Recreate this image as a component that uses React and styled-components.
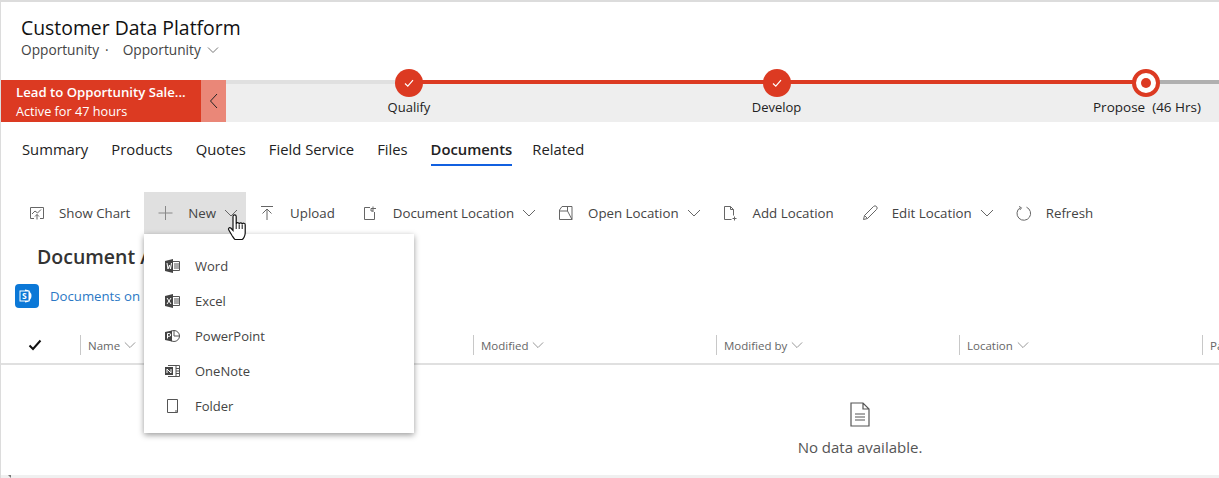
import React from "react";
import styled, { createGlobalStyle } from "styled-components";

const GlobalStyle = createGlobalStyle`
  html, body {
    margin: 0;
    padding: 0;
    background: #fff;
  }
  body {
    font-family: "Open Sans", "Noto Sans", sans-serif;
    overflow: hidden;
  }
`;

const Page = styled.div`
  position: relative;
  width: 1219px;
  height: 478px;
  box-sizing: border-box;
  overflow: hidden;
  border-top: 2px solid #dcdcdc;
  border-left: 1px solid #dcdcdc;
`;

const Header = styled.header`
  height: 78px;
  box-sizing: border-box;
  padding: 13px 0 0 20px;
`;

const Title = styled.h1`
  margin: 0;
  font-size: 19.4px;
  line-height: 26px;
  font-weight: 400;
  color: #111;
`;

const Sub = styled.div`
  display: flex;
  align-items: center;
  font-size: 13.7px;
  line-height: 18px;
  color: #444;
`;

const SubDot = styled.span`
  margin: 0 14px 0 6px;
`;

const SubCaret = styled.svg`
  margin-left: 6px;
`;

const Bpf = styled.div`
  display: flex;
  height: 42px;
`;

const Flag = styled.div`
  width: 200px;
  box-sizing: border-box;
  padding: 2px 0 0 15px;
  background: #dc3a22;
  color: #fff;
  flex: none;
`;

const FlagTitle = styled.div`
  font-size: 13.2px;
  line-height: 20px;
  font-weight: 600;
  white-space: nowrap;
`;

const FlagSub = styled.div`
  font-size: 12.7px;
  line-height: 18px;
`;

const Collapse = styled.div`
  width: 25px;
  flex: none;
  background: #ea8778;
  display: flex;
  align-items: center;
  justify-content: center;
  color: #222;
`;

const Track = styled.div`
  display: grid;
  grid-template-columns: 366px 369px 369px;
  flex: none;
  background: linear-gradient(#e0e0e0 4px, #eee 4px);
`;

const Stage = styled.div`
  position: relative;
  display: flex;
  flex-direction: column;
  align-items: center;
  font-size: ${(p) => (p.$current ? 13.5 : 13)}px;
  line-height: 18px;
  color: #222;
  white-space: nowrap;
  font-weight: ${(p) => (p.$current ? 500 : 400)};

  &::after {
    content: "";
    position: absolute;
    left: 50%;
    width: 100%;
    top: 0;
    height: 4px;
    background: ${(p) => (p.$current ? "#b0b0b0" : "#dc3a22")};
  }
`;

const Dot = styled.div`
  position: relative;
  z-index: 1;
  width: 28px;
  height: 28px;
  margin-top: -11px;
  margin-bottom: 1px;
  border-radius: 50%;
  box-sizing: border-box;
  background: ${(p) => (p.$current ? "#fff" : "#dc3a22")};
  border: ${(p) => (p.$current ? "4px solid #dc3a22" : "none")};
  display: flex;
  align-items: center;
  justify-content: center;
`;

const Bullet = styled.span`
  width: 10px;
  height: 10px;
  border-radius: 50%;
  background: #dc3a22;
`;

const StageHours = styled.span`
  padding-left: 3px;
`;

const Tabs = styled.nav`
  display: flex;
  height: 70px;
  box-sizing: border-box;
  padding: 17px 0 0 21px;
  gap: 23px;
`;

const Tab = styled.div`
  height: 25px;
  font-size: 14.8px;
  line-height: 20px;
  font-weight: ${(p) => (p.$active ? 600 : 400)};
  color: #222;
  margin-right: ${(p) => (p.$active ? -3 : 0)}px;
  border-bottom: 2px solid ${(p) => (p.$active ? "#1160e0" : "transparent")};
`;

const Toolbar = styled.div`
  display: flex;
  height: 42px;
  padding-left: 14px;
`;

const Tool = styled.div`
  display: flex;
  align-items: center;
  padding: 0 ${(p) => (p.$menu ? 8 : 14)}px 0 14px;
  background: ${(p) => (p.$open ? "#e0e0e0" : "transparent")};
  font-size: 13.3px;
  color: #444;
  white-space: nowrap;
`;

const ToolIcon = styled.span`
  width: 16px;
  height: 16px;
  margin-right: 14px;
  display: flex;
  color: #666;
`;

const Caret = styled.svg`
  margin-left: ${(p) => p.$gap}px;
  flex: none;
`;

const Section = styled.section`
  padding: 8px 0 0 36px;
  height: 50px;
  box-sizing: border-box;
`;

const Heading = styled.h2`
  margin: 0;
  font-size: 19.5px;
  line-height: 30px;
  font-weight: 600;
  color: #333;
`;

const SiteRow = styled.div`
  display: flex;
  align-items: center;
  gap: 11px;
  height: 24px;
  padding-left: 14px;
  font-size: 13.2px;
  color: #2b78c5;
`;

const GridHead = styled.div`
  display: grid;
  grid-template-columns: 79px 393px 243px 243px 243px 243px;
  margin-top: 27px;
  height: 20px;
  overflow: hidden;
`;

const HeadCheck = styled.div`
  display: flex;
  align-items: center;
  justify-content: center;
  padding-right: 11px;
`;

const HeadCell = styled.div`
  display: flex;
  align-items: center;
  border-left: 1px solid #c8c8c8;
  padding-left: 7px;
  font-size: 11.5px;
  color: #666;
  white-space: nowrap;
`;

const HeadRule = styled.div`
  height: 2px;
  margin-top: 8px;
  background: #e0e0e0;
`;

const Empty = styled.div`
  height: 110px;
  box-sizing: border-box;
  padding: 37px 0 0 0;
  margin-left: 500px;
  display: flex;
  flex-direction: column;
  align-items: center;
  color: #555;
  font-size: 15px;
  line-height: 20px;
  gap: 10px;
`;

const BottomBar = styled.div`
  position: relative;
  height: 3px;
  background: #f0f0f0;

  &::before {
    content: "";
    position: absolute;
    left: 7px;
    top: 0;
    border-top: 3px solid #777;
    border-left: 3px solid transparent;
  }
`;

const Menu = styled.div`
  position: absolute;
  left: 143px;
  top: 232px;
  width: 270px;
  height: 199px;
  box-sizing: border-box;
  padding: 14px 0 10px;
  background: #fff;
  box-shadow: 0 2px 6px rgba(0, 0, 0, 0.4);
  z-index: 3;
`;

const MenuItem = styled.div`
  display: flex;
  align-items: center;
  height: 35px;
  padding-left: 21px;
  gap: 15px;
  font-size: 13px;
  color: #444;
`;

const Pointer = styled.span`
  position: absolute;
  left: 226px;
  top: 212px;
  z-index: 4;
  display: block;
  width: 22px;
  height: 28px;
`;

const Chevron = ({ size = 14, color = "#666", gap = 8 }) => (
  <Caret $gap={gap} width={size} height={size} viewBox="0 0 14 14" fill="none" stroke={color} strokeWidth="1">
    <path d="M1 4l6 6 6-6" />
  </Caret>
);

const Check = () => (
  <svg width="12" height="12" viewBox="0 0 12 12" fill="none" stroke="#fff" strokeWidth="1.2">
    <path d="M2 6.500l2.800 2.600L10 3.200" />
  </svg>
);

const stroke = { fill: "none", stroke: "currentColor", strokeWidth: 1 };

const ChartIcon = () => (
  <svg width="16" height="16" viewBox="0 0 16 16" {...stroke}>
    <path d="M5 13.500H1.500v-11h13v11H11M3 9l3-3 2.500 2L12 4.500M8 14.500V9.500M6 11.500l2-2 2 2" />
  </svg>
);

const PlusIcon = () => (
  <svg width="16" height="16" viewBox="0 0 16 16" fill="none" stroke="#888">
    <path d="M7.500 1v14M0.500 8h14" />
  </svg>
);

const UploadIcon = () => (
  <svg width="16" height="16" viewBox="0 0 16 16" {...stroke}>
    <path d="M1 1.500h12M7 15V4M2.500 8.500L7 4l4.500 4.500" />
  </svg>
);

const DocLocationIcon = () => (
  <svg width="16" height="16" viewBox="0 0 16 16" {...stroke}>
    <path d="M7 2.500H1.500v12h10V7M10 1.500V7M8 3.500h5M8 3.500v2.500h2" />
  </svg>
);

const OpenLocationIcon = () => (
  <svg width="16" height="16" viewBox="0 0 16 16" {...stroke}>
    <path d="M4 1.500h10v13H1.500V5zM1.500 6h8l4.500 8.500M9.500 6V2" />
  </svg>
);

const AddLocationIcon = () => (
  <svg width="16" height="16" viewBox="0 0 16 16" {...stroke}>
    <path d="M8.500 14.500H1.500v-13h6l3 3v6M7.500 1.500v3h3M11.500 11.500v4M9.500 13.500h4" />
  </svg>
);

const PencilIcon = () => (
  <svg width="16" height="16" viewBox="0 0 16 16" {...stroke}>
    <path d="M1.500 14.500l1-4L11.500 1.500a2 2 0 0 1 3 3l-9 9zM2.500 10.500l3 3" />
  </svg>
);

const RefreshIcon = () => (
  <svg width="16" height="16" viewBox="0 0 16 16" {...stroke}>
    <path d="M10.500 2.200A6.800 6.800 0 1 1 4 2.800M3 1.500l2.500 1.300L3.800 5" />
  </svg>
);

const OfficeIcon = ({ letter }) => (
  <svg width="15" height="14" viewBox="0 0 15 14">
    <path d="M0 2l8-2v14l-8-2z" fill="#444" />
    <path d="M8 2.500h6.500v9H8" fill="none" stroke="#555" />
    <path d="M9 5h5M9 7h5M9 9h5" stroke="#555" />
    <path d={letter} fill="none" stroke="#fff" strokeWidth="1" />
  </svg>
);

const PowerPointIcon = () => (
  <svg width="15" height="14" viewBox="0 0 15 14">
    <circle cx="9" cy="7" r="5.500" fill="none" stroke="#555" />
    <path d="M9 1.500V7h5.500" fill="none" stroke="#555" />
    <path d="M0 3l7-1.500v11L0 11z" fill="#444" />
    <path d="M2.500 9.500v-5h1.800a1.300 1.300 0 0 1 0 2.800H2.500" fill="none" stroke="#fff" />
  </svg>
);

const OneNoteIcon = () => (
  <svg width="15" height="14" viewBox="0 0 15 14">
    <path d="M3 1.500h11.500v11H3" fill="none" stroke="#555" />
    <path d="M11 1.500v11M11 4.500h3.500M11 7h3.500M11 9.500h3.500" stroke="#555" />
    <path d="M0 3h8v8H0z" fill="#444" />
    <path d="M2 9V5l4 4V5" fill="none" stroke="#fff" />
  </svg>
);

const FolderIcon = () => (
  <svg width="15" height="16" viewBox="0 0 15 16" fill="none" stroke="#555">
    <path d="M2.500 1.500h10v13h-10zM11 12v2.500" />
  </svg>
);

const SharePointIcon = () => (
  <svg width="24" height="24" viewBox="0 0 24 24">
    <rect width="24" height="24" rx="4" fill="#0b78d7" />
    <path d="M10 5.500a6.500 6.500 0 1 1 0 13z" fill="#fff" />
    <rect x="5" y="7" width="9" height="10" fill="#0b78d7" stroke="#fff" strokeWidth="1" />
    <text x="7" y="15" fontSize="8.500" fontWeight="700" fill="#fff" fontFamily="Open Sans">S</text>
  </svg>
);

const DocIcon = () => (
  <svg width="20" height="25" viewBox="0 0 20 25" fill="none" stroke="#555" strokeWidth="1.200">
    <path d="M1 1h12l6 6v17H1zM13 1v6h6M5 12h10M5 15h10M5 18h10" />
  </svg>
);

const HeadCheckMark = () => (
  <svg width="14" height="12" viewBox="0 0 14 12" fill="none" stroke="#111" strokeWidth="2">
    <path d="M1.500 6.500l3.500 3.500 7.500-8.500" />
  </svg>
);

const HandCursor = () => (
  <svg width="22" height="28" viewBox="0 0 22 28">
    <path
      d="M6 2.500a1.600 1.600 0 0 1 3.200 0v7.500a1.500 1.500 0 0 1 3 .2 1.500 1.500 0 0 1 3 .3 1.500 1.500 0 0 1 3 .5V19c0 3-2 6-3 6.500H8c-1 -.5-2-2.500-3-4L1.800 16c-1-1.500.5-3 2-2l2.200 2.500z"
      fill="#fff"
      stroke="#111"
      strokeWidth="1.200"
    />
    <path d="M9.200 10v5M12.200 10.500v4.500M15.200 11v4" fill="none" stroke="#111" />
  </svg>
);

const tools = [
  { label: "Show Chart", icon: <ChartIcon /> },
  { label: "New", icon: <PlusIcon />, menu: true, open: true },
  { label: "Upload", icon: <UploadIcon /> },
  { label: "Document Location", icon: <DocLocationIcon />, menu: true },
  { label: "Open Location", icon: <OpenLocationIcon />, menu: true },
  { label: "Add Location", icon: <AddLocationIcon /> },
  { label: "Edit Location", icon: <PencilIcon />, menu: true },
  { label: "Refresh", icon: <RefreshIcon /> },
];

const menuItems = [
  { label: "Word", icon: <OfficeIcon letter="M2 4l1 6 1.500-4 1 4 1-6" /> },
  { label: "Excel", icon: <OfficeIcon letter="M2 4l4 6M6 4l-4 6" /> },
  { label: "PowerPoint", icon: <PowerPointIcon /> },
  { label: "OneNote", icon: <OneNoteIcon /> },
  { label: "Folder", icon: <FolderIcon /> },
];

const tabs = ["Summary", "Products", "Quotes", "Field Service", "Files", "Documents", "Related"];
const columns = ["Name", "Modified", "Modified by", "Location", "Path"];

export default function App() {
  return (
    <Page>
      <GlobalStyle />
      <Header>
        <Title>Customer Data Platform</Title>
        <Sub>
          <span>Opportunity</span>
          <SubDot>·</SubDot>
          <span>Opportunity</span>
          <SubCaret width="12" height="12" viewBox="0 0 12 12" fill="none" stroke="#777">
            <path d="M1 3.500l5 5 5-5" />
          </SubCaret>
        </Sub>
      </Header>
      <Bpf>
        <Flag>
          <FlagTitle>Lead to Opportunity Sale...</FlagTitle>
          <FlagSub>Active for 47 hours</FlagSub>
        </Flag>
        <Collapse>
          <svg width="10" height="16" viewBox="0 0 10 16" fill="none" stroke="#222">
            <path d="M8 1L1.500 8 8 15" />
          </svg>
        </Collapse>
        <Track>
          <Stage>
            <Dot><Check /></Dot>
            Qualify
          </Stage>
          <Stage>
            <Dot><Check /></Dot>
            Develop
          </Stage>
          <Stage $current>
            <Dot $current><Bullet /></Dot>
            <StageHours>Propose&nbsp;&nbsp;(46 Hrs)</StageHours>
          </Stage>
        </Track>
      </Bpf>
      <Tabs>
        {tabs.map((t) => (
          <Tab key={t} $active={t === "Documents"}>{t}</Tab>
        ))}
      </Tabs>
      <Toolbar>
        {tools.map((t) => (
          <Tool key={t.label} $menu={t.menu} $open={t.open}>
            <ToolIcon>{t.icon}</ToolIcon>
            {t.label}
            {t.menu && <Chevron />}
          </Tool>
        ))}
      </Toolbar>
      <Section>
        <Heading>Document Associated Grid</Heading>
      </Section>
      <SiteRow>
        <SharePointIcon />
        Documents on Default Site 1
      </SiteRow>
      <GridHead>
        <HeadCheck><HeadCheckMark /></HeadCheck>
        {columns.map((c) => (
          <HeadCell key={c}>
            {c}
            <Chevron size={12} color="#888" gap={4} />
          </HeadCell>
        ))}
      </GridHead>
      <HeadRule />
      <Empty>
        <DocIcon />
        No data available.
      </Empty>
      <BottomBar />
      <Menu>
        {menuItems.map((m) => (
          <MenuItem key={m.label}>
            {m.icon}
            {m.label}
          </MenuItem>
        ))}
      </Menu>
      <Pointer>
        <HandCursor />
      </Pointer>
    </Page>
  );
}
